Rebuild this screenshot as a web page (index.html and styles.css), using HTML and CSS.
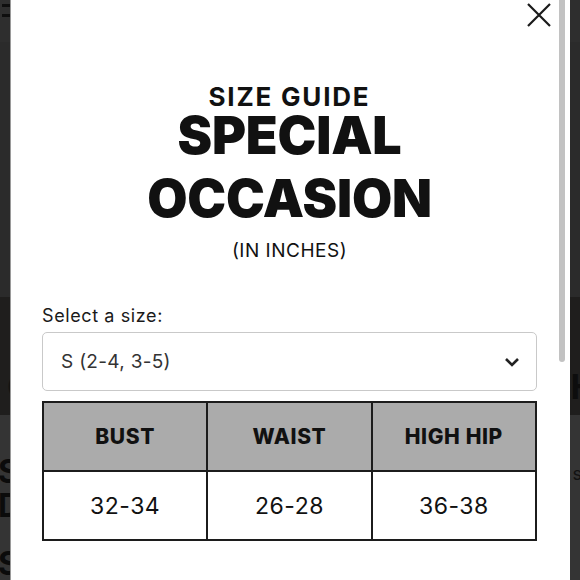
FILE: index.html
```html
<!DOCTYPE html>
<html lang="en">
<head>
<meta charset="utf-8">
<title>Size Guide</title>
<link rel="stylesheet" href="styles.css">
</head>
<body>
<div class="page">
  <header class="site-header">
    <div class="burger"><span></span><span></span></div>
  </header>
  <section class="hero"></section>
  <section class="band">
    <div class="band-row"><span class="band-c">C</span><span class="band-h">H</span></div>
  </section>
  <section class="lower">
    <div class="lower-row">
      <h2 class="lower-title">S<br>D</h2>
      <span class="lower-s">s</span>
    </div>
    <h2 class="lower-title2">S</h2>
  </section>
</div>

<div class="modal">
  <button class="close" aria-label="Close">
    <svg width="24" height="24" viewBox="0 0 24 24"><path d="M1 1 L23 23 M23 1 L1 23" stroke="#1a1a1a" stroke-width="2.2" fill="none"/></svg>
  </button>
  <div class="scrollbar"></div>
  <div class="modal-body">
    <div class="titles">
      <div class="kicker">SIZE GUIDE</div>
      <h1 class="title">SPECIAL<br>OCCASION</h1>
      <div class="units">(IN INCHES)</div>
    </div>
    <label class="select-label">Select a size:</label>
    <div class="select">
      <span>S (2-4, 3-5)</span>
      <svg class="chev" width="16" height="10" viewBox="0 0 16 10"><path d="M2 2 L8 8 L14 2" stroke="#222" stroke-width="2.6" fill="none"/></svg>
    </div>
    <table class="sizes">
      <thead>
        <tr><th>BUST</th><th>WAIST</th><th>HIGH HIP</th></tr>
      </thead>
      <tbody>
        <tr><td>32-34</td><td>26-28</td><td>36-38</td></tr>
      </tbody>
    </table>
  </div>
</div>
</body>
</html>
```

FILE: styles.css
```css
* { box-sizing: border-box; }
html, body { margin: 0; padding: 0; }
body {
  width: 580px;
  height: 580px;
  overflow: hidden;
  font-family: "Inter", "Liberation Sans", sans-serif;
  background: #2b2b2b;
}

/* background page */
.page { display: flex; flex-direction: column; }
.site-header {
  height: 42px;
  background: #2e2e2e;
  padding: 4px 0 0 2px;
}
.burger { display: flex; flex-direction: column; gap: 7px; width: 12px; }
.burger span { display: block; height: 3px; background: #0e0e0e; }
.hero { height: 255px; background: #2b2b2b; }
.band { height: 118px; background: #1f1e1d; padding-top: 70px; }
.band-row { display: flex; justify-content: space-between; font: 700 34px/40px "Inter", sans-serif; color: #0d0d0d; }
.band-c { margin-left: 7px; color: #141312; }
.band-h { margin-right: -16px; color: #0d0d0d; }
.lower { height: 300px; background: #343434; padding: 40px 0 0 0; }
.lower-row { display: flex; justify-content: space-between; }
.lower-title { margin: 0 0 0 -2px; font: 700 32px/34px "Inter", sans-serif; color: #0b0b0b; }
.lower-s { font: 400 18px/22px "Inter", sans-serif; color: #111; margin-right: -2px; margin-top: 8px; }
.lower-title2 { margin: 24px 0 0 -2px; font: 700 32px/34px "Inter", sans-serif; color: #0b0b0b; }

/* modal */
.modal {
  position: fixed;
  left: 10px;
  top: 0;
  width: 560px;
  height: 580px;
  background: #fff;
  border-left: 1px solid #9a9a9a;
}
.close {
  position: absolute;
  top: 3px;
  right: 19px;
  padding: 0;
  border: 0;
  background: none;
  width: 24px;
  height: 24px;
}
.close svg { display: block; }
.scrollbar {
  position: absolute;
  right: 5px;
  top: -20px;
  width: 6px;
  height: 382px;
  border-radius: 3px;
  background: #c2c2c2;
}
.modal-body {
  padding: 0 33px 0 31px;
  color: #111;
}
.titles {
  text-align: center;
  padding-top: 90px;
}
.kicker {
  font-size: 26px;
  font-weight: 700;
  line-height: 14px;
  letter-spacing: 1.8px;
}
.title {
  margin: 0;
  font-size: 52px;
  font-weight: 900;
  line-height: 63px;
  letter-spacing: -0.2px;
}
.units {
  font-size: 19px;
  font-weight: 400;
  line-height: 24px;
  margin-top: 9px;
  letter-spacing: 0.5px;
}
.select-label {
  display: block;
  margin-top: 41px;
  font-size: 18px;
  line-height: 24px;
  letter-spacing: 0.6px;
  color: #1a1a1a;
}
.select {
  margin-top: 4px;
  height: 59px;
  border: 1px solid #c9c9c9;
  border-radius: 5px;
  display: flex;
  align-items: center;
  justify-content: space-between;
  padding: 0 16px 0 18px;
  font-size: 19px;
  color: #333;
  letter-spacing: 0.3px;
}
.chev { display: block; }
.sizes {
  margin-top: 10px;
  width: 100%;
  border-collapse: collapse;
  table-layout: fixed;
}
.sizes th, .sizes td {
  border: 2px solid #1c1c1c;
  text-align: center;
  height: 69px;
  padding: 0;
}
.sizes th {
  background: #ababab;
  font-size: 21px;
  font-weight: 800;
  letter-spacing: 0.6px;
  color: #111;
}
.sizes td {
  font-size: 23px;
  font-weight: 400;
  color: #111;
  letter-spacing: 0.5px;
}
```
